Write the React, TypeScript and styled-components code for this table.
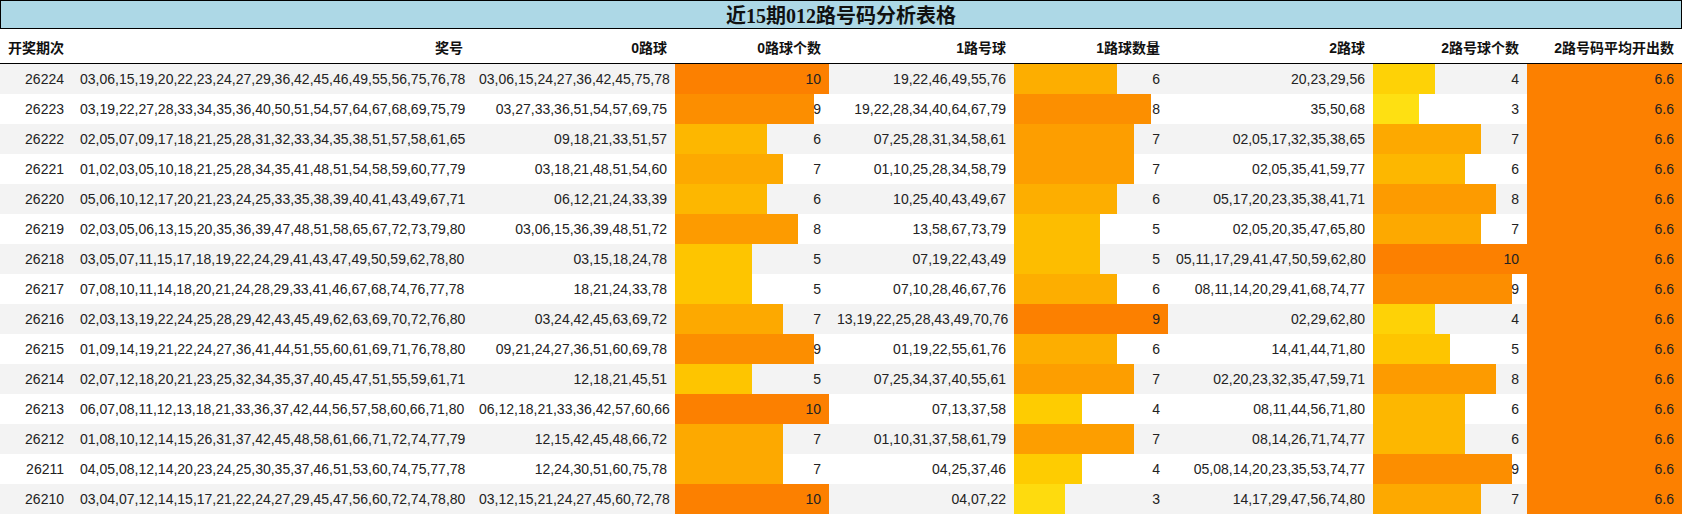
import React from "react";
import styled, { createGlobalStyle } from "styled-components";

const GlobalStyle = createGlobalStyle`
  html, body { margin: 0; padding: 0; background: #ffffff; }
  body { font-family: "Liberation Sans", "Noto Sans CJK SC", sans-serif; color: #222; }
`;

const COLS = "72px 399px 204px 154px 185px 154px 205px 154px 155px";

const Page = styled.div`
  width: 1682px;
`;

const Title = styled.div`
  height: 27px;
  border: 1px solid #000;
  background: #add8e6;
  display: flex;
  align-items: center;
  justify-content: center;
  font-family: "Liberation Serif", "Noto Sans CJK SC", serif;
  font-weight: bold;
  font-size: 20px;
  color: #111;
`;

const HeaderRow = styled.div`
  display: grid;
  grid-template-columns: ${COLS};
  height: 34px;
  border-bottom: 1px solid #000;
  background: #fff;
`;

const HeadCell = styled.div`
  padding: 9px 8px 5px;
  line-height: 20px;
  font-size: 14px;
  font-weight: bold;
  text-align: right;
  white-space: nowrap;
  color: #111;
`;

const Row = styled.div<{ $alt: boolean }>`
  display: grid;
  grid-template-columns: ${COLS};
  height: 30px;
  background: ${(p) => (p.$alt ? "#f3f3f3" : "#ffffff")};
`;

const Cell = styled.div`
  padding: 0 8px;
  line-height: 30px;
  font-size: 14px;
  text-align: right;
  white-space: nowrap;
  overflow: visible;
`;

const BarCell = styled(Cell)<{ $pct: number; $color: string }>`
  background: linear-gradient(
    to right,
    ${(p) => p.$color} 0%,
    ${(p) => p.$color} ${(p) => p.$pct}%,
    transparent ${(p) => p.$pct}%,
    transparent 100%
  );
`;

function barColor(ratio: number): string {
  const r = Math.round(255 - 3 * ratio);
  const g = Math.round(128 + (1 - ratio) * 137);
  const b = ratio < 0.45 ? Math.round((0.45 - ratio) * 120) : 0;
  return `rgb(${r},${g},${b})`;
}

type Rec = { id: string; nums: string; r0: string; r1: string; r2: string };

const data: Rec[] = [
  { id: "26224", nums: "03,06,15,19,20,22,23,24,27,29,36,42,45,46,49,55,56,75,76,78", r0: "03,06,15,24,27,36,42,45,75,78", r1: "19,22,46,49,55,76", r2: "20,23,29,56" },
  { id: "26223", nums: "03,19,22,27,28,33,34,35,36,40,50,51,54,57,64,67,68,69,75,79", r0: "03,27,33,36,51,54,57,69,75", r1: "19,22,28,34,40,64,67,79", r2: "35,50,68" },
  { id: "26222", nums: "02,05,07,09,17,18,21,25,28,31,32,33,34,35,38,51,57,58,61,65", r0: "09,18,21,33,51,57", r1: "07,25,28,31,34,58,61", r2: "02,05,17,32,35,38,65" },
  { id: "26221", nums: "01,02,03,05,10,18,21,25,28,34,35,41,48,51,54,58,59,60,77,79", r0: "03,18,21,48,51,54,60", r1: "01,10,25,28,34,58,79", r2: "02,05,35,41,59,77" },
  { id: "26220", nums: "05,06,10,12,17,20,21,23,24,25,33,35,38,39,40,41,43,49,67,71", r0: "06,12,21,24,33,39", r1: "10,25,40,43,49,67", r2: "05,17,20,23,35,38,41,71" },
  { id: "26219", nums: "02,03,05,06,13,15,20,35,36,39,47,48,51,58,65,67,72,73,79,80", r0: "03,06,15,36,39,48,51,72", r1: "13,58,67,73,79", r2: "02,05,20,35,47,65,80" },
  { id: "26218", nums: "03,05,07,11,15,17,18,19,22,24,29,41,43,47,49,50,59,62,78,80", r0: "03,15,18,24,78", r1: "07,19,22,43,49", r2: "05,11,17,29,41,47,50,59,62,80" },
  { id: "26217", nums: "07,08,10,11,14,18,20,21,24,28,29,33,41,46,67,68,74,76,77,78", r0: "18,21,24,33,78", r1: "07,10,28,46,67,76", r2: "08,11,14,20,29,41,68,74,77" },
  { id: "26216", nums: "02,03,13,19,22,24,25,28,29,42,43,45,49,62,63,69,70,72,76,80", r0: "03,24,42,45,63,69,72", r1: "13,19,22,25,28,43,49,70,76", r2: "02,29,62,80" },
  { id: "26215", nums: "01,09,14,19,21,22,24,27,36,41,44,51,55,60,61,69,71,76,78,80", r0: "09,21,24,27,36,51,60,69,78", r1: "01,19,22,55,61,76", r2: "14,41,44,71,80" },
  { id: "26214", nums: "02,07,12,18,20,21,23,25,32,34,35,37,40,45,47,51,55,59,61,71", r0: "12,18,21,45,51", r1: "07,25,34,37,40,55,61", r2: "02,20,23,32,35,47,59,71" },
  { id: "26213", nums: "06,07,08,11,12,13,18,21,33,36,37,42,44,56,57,58,60,66,71,80", r0: "06,12,18,21,33,36,42,57,60,66", r1: "07,13,37,58", r2: "08,11,44,56,71,80" },
  { id: "26212", nums: "01,08,10,12,14,15,26,31,37,42,45,48,58,61,66,71,72,74,77,79", r0: "12,15,42,45,48,66,72", r1: "01,10,31,37,58,61,79", r2: "08,14,26,71,74,77" },
  { id: "26211", nums: "04,05,08,12,14,20,23,24,25,30,35,37,46,51,53,60,74,75,77,78", r0: "12,24,30,51,60,75,78", r1: "04,25,37,46", r2: "05,08,14,20,23,35,53,74,77" },
  { id: "26210", nums: "03,04,07,12,14,15,17,21,22,24,27,29,45,47,56,60,72,74,78,80", r0: "03,12,15,21,24,27,45,60,72,78", r1: "04,07,22", r2: "14,17,29,47,56,74,80" },
];

const count = (s: string) => s.split(",").length;

const rows = data.map((d) => ({ ...d, c0: count(d.r0), c1: count(d.r1), c2: count(d.r2) }));
const avg2 = rows.reduce((a, r) => a + r.c2, 0) / rows.length;
const max0 = Math.max(...rows.map((r) => r.c0));
const max1 = Math.max(...rows.map((r) => r.c1));
const max2 = Math.max(...rows.map((r) => r.c2));

const headers = ["开奖期次", "奖号", "0路球", "0路球个数", "1路号球", "1路球数量", "2路球", "2路号球个数", "2路号码平均开出数"];

function Bar({ value, max, label }: { value: number; max: number; label: string }) {
  const ratio = max ? value / max : 0;
  return (
    <BarCell $pct={ratio * 100} $color={barColor(ratio)}>
      {label}
    </BarCell>
  );
}

export default function App() {
  return (
    <Page>
      <GlobalStyle />
      <Title>近15期012路号码分析表格</Title>
      <HeaderRow>
        {headers.map((h) => (
          <HeadCell key={h}>{h}</HeadCell>
        ))}
      </HeaderRow>
      {rows.map((r, i) => (
        <Row key={r.id} $alt={i % 2 === 0}>
          <Cell>{r.id}</Cell>
          <Cell>{r.nums}</Cell>
          <Cell>{r.r0}</Cell>
          <Bar value={r.c0} max={max0} label={String(r.c0)} />
          <Cell>{r.r1}</Cell>
          <Bar value={r.c1} max={max1} label={String(r.c1)} />
          <Cell>{r.r2}</Cell>
          <Bar value={r.c2} max={max2} label={String(r.c2)} />
          <Bar value={avg2} max={avg2} label={avg2.toFixed(1)} />
        </Row>
      ))}
    </Page>
  );
}
